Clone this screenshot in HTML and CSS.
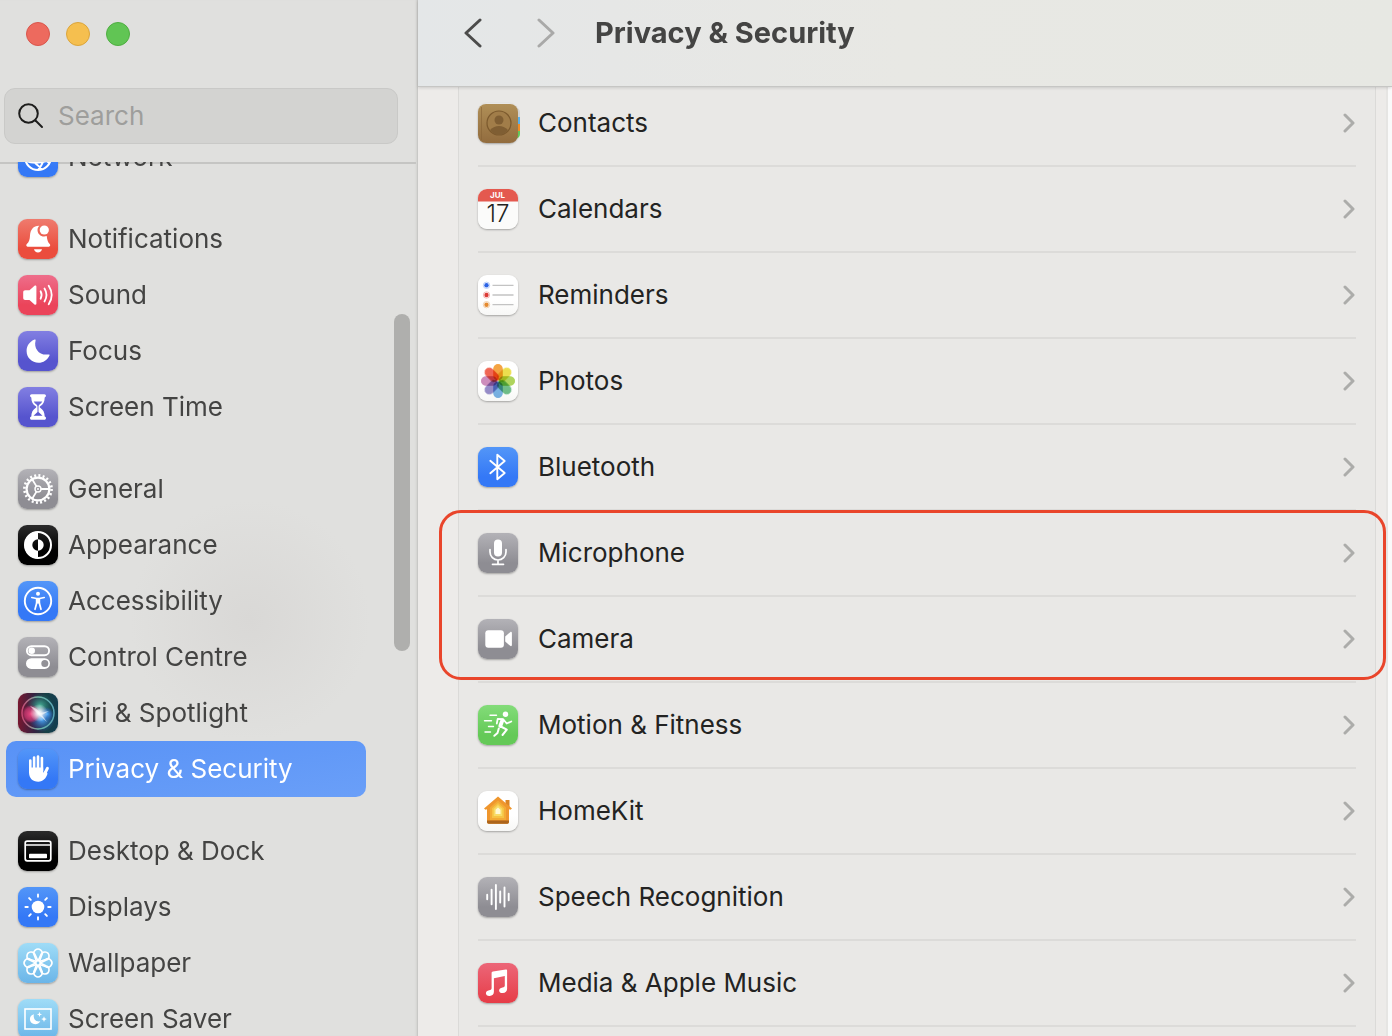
FILE: index.html
```html
<!DOCTYPE html>
<html lang="en-GB">
<head>
<meta charset="utf-8">
<title>Privacy &amp; Security</title>
<meta name="viewport" content="width=device-width, initial-scale=1">
<link rel="stylesheet" href="styles.css">
</head>
<body>
<div class="window">
  <aside class="sidebar">
    <header class="sidebar-head">
      <div class="lights">
        <button class="light light-close" type="button" aria-label="Close"></button>
        <button class="light light-min" type="button" aria-label="Minimise"></button>
        <button class="light light-zoom" type="button" aria-label="Zoom"></button>
      </div>
      <label class="search">
        <svg class="search-icon" viewBox="0 0 26 26" aria-hidden="true"><circle cx="10.500" cy="10.500" r="9.300"/><path d="M17.500 17.500L24 24"/></svg>
        <input class="search-input" type="search" placeholder="Search" aria-label="Search">
      </label>
    </header>
    <nav class="nav" aria-label="Settings">
      <div class="nav-scroll">
        <ul class="nav-group">
          <li><a class="nav-item" href="#network"><svg class="tile blue" viewBox="0 0 40 40" aria-hidden="true"><g fill="none" stroke="#fff" stroke-width="2"><circle cx="20" cy="20" r="13"/><path d="M8 24q10 4 24-1M14 18l3 8 7 6M27 17q-1 9-7 16M16 25l8-6 7 7"/></g></svg>Network</a></li>
        </ul>
        <ul class="nav-group">
          <li><a class="nav-item" href="#notifications"><svg class="tile red" viewBox="0 0 40 40" aria-hidden="true"><path fill="#fff" d="M21.300 6.800c-1.200 1.200-1.800 2.600-1.800 4.200 0 3.500 2.900 6.600 6.600 6.600 1 0 1.800-.2 2.600-.5.500 4.400 1.300 6.300 3 8 .9 1 .6 2.600-.8 2.600H9.600c-1.400 0-1.700-1.600-.8-2.600 2.300-2.500 3-4.500 3.200-8.700.3-5.500 3.500-9.800 9.300-9.600zM16 30.200h8c-.4 2-1.900 3.200-4 3.200s-3.600-1.200-4-3.200z"/><circle cx="26.300" cy="11" r="4.600" fill="#fff"/></svg>Notifications</a></li>
          <li><a class="nav-item" href="#sound"><svg class="tile pink" viewBox="0 0 40 40" aria-hidden="true"><path fill="#fff" d="M7.200 15.200h4.300l5-4.400c.8-.7 1.900-.4 1.900.8v17c0 1.200-1.100 1.500-1.900.8l-5-4.400H7.200c-1.300 0-2-.7-2-2v-5.800c0-1.300.7-2 2-2z"/><g fill="none" stroke="#fff" stroke-width="1.800" stroke-linecap="round"><path d="M22.600 16.300q2 3.700 0 7.400M26.500 13.500q4 6.500 0 13M30.700 10.700q6 9.300 0 18.600"/></g></svg>Sound</a></li>
          <li><a class="nav-item" href="#focus"><svg class="tile indigo" viewBox="0 0 40 40" aria-hidden="true"><path fill="#fff" d="M16.600 8.600c.6-.3 1.200.1 1 .8-2.200 8 3.800 15.600 13.100 14 .7-.1 1.100.4.800 1-2 4.500-6.200 7.300-11 7.300C13.900 31.700 8.600 26.700 8.600 20c0-5 3-9.400 8-11.400z"/></svg>Focus</a></li>
          <li><a class="nav-item" href="#screen-time"><svg class="tile indigo" viewBox="0 0 40 40" aria-hidden="true"><path fill="#fff" fill-rule="evenodd" d="M13.700 7.200h12.600c2.100 0 2.200 2.900.4 3.200-.1 4.300-1.400 6.700-4.500 8.800-.6.400-.6 1.200 0 1.600 3.100 2.100 4.400 4.500 4.500 8.800 1.800.3 1.700 3.200-.4 3.200H13.700c-2.100 0-2.200-2.900-.4-3.200.1-4.300 1.400-6.700 4.500-8.800.6-.4.600-1.200 0-1.600-3.100-2.100-4.400-4.500-4.500-8.800-1.800-.3-1.700-3.200.4-3.200zm2 7.200q1 1.800 2.800 3.100 1 .8 1 2v5.500l-4 3.800h9l-4-3.800v-5.500q0-1.200 1-2 1.800-1.300 2.800-3.100z"/></svg>Screen Time</a></li>
        </ul>
        <ul class="nav-group">
          <li><a class="nav-item" href="#general"><svg class="tile gray" viewBox="0 0 40 40" aria-hidden="true"><g fill="none" stroke="#fff"><circle cx="20" cy="20" r="13.600" stroke-width="2.600" stroke-dasharray="2 2.272"/><circle cx="20" cy="20" r="11.400" stroke-width="2.200"/><circle cx="20" cy="20" r="3" stroke-width="1.400"/><path stroke-width="1.800" d="M23 20h8.500M18.500 17.400L14 10M18.500 22.600L14 30"/></g><circle cx="20" cy="20" r="1" fill="#fff"/></svg>General</a></li>
          <li><a class="nav-item" href="#appearance"><svg class="tile black" viewBox="0 0 40 40" aria-hidden="true"><circle cx="20" cy="20" r="13" fill="none" stroke="#fff" stroke-width="2"/><path fill="#fff" d="M20 6.500a13.500 13.500 0 0 0 0 27V25.700a5.700 5.700 0 0 1 0-11.400zM20 14.300a5.700 5.700 0 0 1 0 11.400z"/></svg>Appearance</a></li>
          <li><a class="nav-item" href="#accessibility"><svg class="tile blue" viewBox="0 0 40 40" aria-hidden="true"><circle cx="20" cy="20" r="13.200" fill="none" stroke="#fff" stroke-width="1.900"/><circle cx="20" cy="12.800" r="2" fill="#fff"/><path d="M13.800 16.500l4.700 1h3l4.700-1M18.700 22l-1.700 6.300M21.300 22l1.700 6.300" fill="none" stroke="#fff" stroke-width="1.700" stroke-linecap="round" stroke-linejoin="round"/><path fill="#fff" d="M17.800 17h4.400v5.500h-4.400z"/></svg>Accessibility</a></li>
          <li><a class="nav-item" href="#control-centre"><svg class="tile gray" viewBox="0 0 40 40" aria-hidden="true"><rect x="8.900" y="9.200" width="22.200" height="9" rx="4.500" fill="none" stroke="#fff" stroke-width="1.900"/><circle cx="13.700" cy="13.700" r="3.300" fill="#fff"/><rect x="8" y="21.300" width="24" height="10.600" rx="5.300" fill="#fff"/><circle cx="26.800" cy="26.600" r="3.500" fill="#929197"/></svg>Control Centre</a></li>
          <li><a class="nav-item" href="#siri"><svg class="tile" viewBox="0 0 40 40" aria-hidden="true"><defs><linearGradient id="siriBack" x1="0" y1="0" x2="1" y2="0"><stop offset="0" stop-color="#781830"/><stop offset=".4" stop-color="#352242"/><stop offset=".7" stop-color="#164046"/><stop offset="1" stop-color="#133d50"/></linearGradient><radialGradient id="siriPink"><stop offset="0" stop-color="#f04a83"/><stop offset=".7" stop-color="#c93670" stop-opacity=".75"/><stop offset="1" stop-color="#b92562" stop-opacity=".1"/></radialGradient><radialGradient id="siriTeal"><stop offset="0" stop-color="#48b59a"/><stop offset="1" stop-color="#227c74" stop-opacity="0"/></radialGradient><radialGradient id="siriBlue"><stop offset="0" stop-color="#4faeff"/><stop offset="1" stop-color="#315dc0" stop-opacity="0"/></radialGradient><radialGradient id="siriGlow"><stop offset="0" stop-color="#fff"/><stop offset=".25" stop-color="#fff" stop-opacity=".85"/><stop offset="1" stop-color="#fff" stop-opacity="0"/></radialGradient><linearGradient id="siriRing"><stop offset="0" stop-color="#c84673"/><stop offset=".5" stop-color="#6fb9a5"/><stop offset="1" stop-color="#5aa5b8"/></linearGradient></defs><rect width="40" height="40" rx="9" fill="url(#siriBack)"/><circle cx="22" cy="13" r="13" fill="url(#siriTeal)"/><circle cx="24" cy="26" r="13" fill="url(#siriBlue)"/><circle cx="13" cy="21" r="9" fill="url(#siriPink)"/><circle cx="29" cy="21" r="7" fill="url(#siriBlue)"/><circle cx="21" cy="20" r="9" fill="url(#siriGlow)"/><path d="M12 13q7 2 10 7l9-2-7 4 5 7-7-6z" fill="#fff" opacity=".6"/><circle cx="20" cy="20" r="16" fill="none" stroke="url(#siriRing)" stroke-width="1.500"/></svg>Siri &amp; Spotlight</a></li>
          <li><a class="nav-item selected" href="#privacy" aria-current="page"><svg class="tile blue" viewBox="0 0 40 40" aria-hidden="true"><g stroke="#fff" stroke-width="2.600" stroke-linecap="round" fill="none"><path d="M12.300 11.500V23M16.100 8.500V21M20 7.500V20M23.900 9V22"/><path d="M29.400 19.300L26.300 25.500" stroke-width="3"/></g><path fill="#fff" d="M11 18.500h14.200v5.500l2.700-3 1.600 3.800c-1.300 4.400-4.300 7.900-9.200 7.900-5.800 0-9.300-3.600-9.300-9.500z"/></svg>Privacy &amp; Security</a></li>
        </ul>
        <ul class="nav-group">
          <li><a class="nav-item" href="#desktop"><svg class="tile black" viewBox="0 0 40 40" aria-hidden="true"><rect x="7.200" y="10.200" width="25.600" height="19.600" rx="2" fill="none" stroke="#fff" stroke-width="1.700"/><path d="M7 14h26" stroke="#fff" stroke-width="1.500"/><rect x="11" y="22.800" width="18" height="4.400" rx=".8" fill="#fff"/></svg>Desktop &amp; Dock</a></li>
          <li><a class="nav-item" href="#displays"><svg class="tile blue" viewBox="0 0 40 40" aria-hidden="true"><circle cx="20" cy="20" r="6.300" fill="#fff"/><path d="M20 7.400v2.400M20 30.200v2.400M7.400 20h2.400M30.200 20h2.400M11.100 11.100l1.700 1.700M27.200 27.200l1.700 1.700M11.100 28.900l1.700-1.700M27.200 12.800l1.700-1.700" stroke="#fff" stroke-width="1.900" stroke-linecap="round"/></svg>Displays</a></li>
          <li><a class="nav-item" href="#wallpaper"><svg class="tile sky" viewBox="0 0 40 40" aria-hidden="true"><defs><path id="petal" d="M18.600 18.500L16.400 12.500A4.200 4.200 0 1 1 23.600 12.500L21.400 18.500"/></defs><g fill="none" stroke="#fff" stroke-width="1.600"><use href="#petal"/><use href="#petal" transform="rotate(45 20 20)"/><use href="#petal" transform="rotate(90 20 20)"/><use href="#petal" transform="rotate(135 20 20)"/><use href="#petal" transform="rotate(180 20 20)"/><use href="#petal" transform="rotate(225 20 20)"/><use href="#petal" transform="rotate(270 20 20)"/><use href="#petal" transform="rotate(315 20 20)"/><circle cx="20" cy="20" r="2.200"/></g></svg>Wallpaper</a></li>
          <li><a class="nav-item" href="#screen-saver"><svg class="tile sky" viewBox="0 0 40 40" aria-hidden="true"><rect x="7" y="10" width="26" height="20" fill="none" stroke="#fff" stroke-width="1.600"/><path fill="#fff" d="M15.900 15.200c-1 4.600 1.900 7.900 6.400 7.100-1.100 2-2.900 3-5 3-3.100 0-5.400-2.200-5.400-5.200 0-2.300 1.500-4.200 4-4.900zM21.500 12.800l.7 1.900 1.900.7-1.900.7-.7 1.900-.7-1.900-1.900-.7 1.900-.7zM26 17.300l.8 2 2 .8-2 .8-.8 2-.8-2-2-.8 2-.8z"/></svg>Screen Saver</a></li>
        </ul>
      </div>
      <div class="scroll-thumb"></div>
    </nav>
  </aside>

  <main class="main">
    <header class="toolbar">
      <button class="step" type="button" aria-label="Back"><svg viewBox="0 0 18 30" aria-hidden="true"><path d="M16 2L2 15l14 13"/></svg></button>
      <button class="step step-off" type="button" aria-label="Forward"><svg viewBox="0 0 18 30" aria-hidden="true"><path d="M2 2l14 13L2 28"/></svg></button>
      <h1 class="title">Privacy &amp; Security</h1>
    </header>
    <div class="content">
      <div class="card">
        <a class="row" href="#contacts"><svg class="tile" viewBox="0 0 40 40" aria-hidden="true"><defs><linearGradient id="leather" x2="0" y2="1"><stop offset="0" stop-color="#b08f57"/><stop offset="1" stop-color="#926c3e"/></linearGradient></defs><path d="M36 5h3q3 1 3 5v5h-6z" fill="#d2d2d0"/><path d="M37 14h5v7h-5z" fill="#58b0ea"/><path d="M37 21h5v7h-5z" fill="#f08c27"/><path d="M37 28h5v3q0 4-5 5z" fill="#63c85b"/><rect x="0" y="1" width="40" height="39" rx="8" fill="url(#leather)"/><path d="M3.500 4v33" stroke="#876336" stroke-width="1" opacity=".6"/><circle cx="21" cy="20" r="12" fill="#a17d49" stroke="#7c5a2e" stroke-width="1.200"/><circle cx="21" cy="17" r="4.500" fill="#7f5e33"/><path d="M12 27q4-4 9-4t9 4q-3.500 5-9 5t-9-5z" fill="#7f5e33"/></svg><span class="row-name">Contacts</span><svg class="chevron" viewBox="0 0 12 20" aria-hidden="true"><path d="M2 2l8 8-8 8"/></svg></a>
        <a class="row" href="#calendars"><svg class="tile" viewBox="0 0 40 40" aria-hidden="true"><rect width="40" height="40" rx="9" fill="#fbfbfa"/><path d="M0 12.500V9a9 9 0 0 1 9-9h22a9 9 0 0 1 9 9v3.500z" fill="#e4594f"/><text x="19.500" y="9.400" class="cal-month">JUL</text><text x="20" y="33" class="cal-day">17</text></svg><span class="row-name">Calendars</span><svg class="chevron" viewBox="0 0 12 20" aria-hidden="true"><path d="M2 2l8 8-8 8"/></svg></a>
        <a class="row" href="#reminders"><svg class="tile white" viewBox="0 0 40 40" aria-hidden="true"><path d="M14.500 10.300h21M14.500 20h21M14.500 29.700h21" stroke="#c3c3c3" stroke-width="1.300"/><g fill="none" stroke-width=".8"><circle cx="8.500" cy="10.300" r="3.200" stroke="#a8c3f8"/><circle cx="8.500" cy="20" r="3.200" stroke="#f0a6a3"/><circle cx="8.500" cy="29.700" r="3.200" stroke="#efc79c"/></g><circle cx="8.500" cy="10.300" r="2.200" fill="#2b63e5"/><circle cx="8.500" cy="20" r="2.200" fill="#dc3a35"/><circle cx="8.500" cy="29.700" r="2.200" fill="#e58a2f"/></svg><span class="row-name">Reminders</span><svg class="chevron" viewBox="0 0 12 20" aria-hidden="true"><path d="M2 2l8 8-8 8"/></svg></a>
        <a class="row" href="#photos"><svg class="tile white" viewBox="0 0 40 40" aria-hidden="true"><g class="petals"><rect x="15.200" y="3" width="9.600" height="16.500" rx="4.800" fill="#f39a2d"/><rect x="15.200" y="3" width="9.600" height="16.500" rx="4.800" fill="#eadb3a" transform="rotate(45 20 20)"/><rect x="15.200" y="3" width="9.600" height="16.500" rx="4.800" fill="#a6cf4a" transform="rotate(90 20 20)"/><rect x="15.200" y="3" width="9.600" height="16.500" rx="4.800" fill="#5fb77c" transform="rotate(135 20 20)"/><rect x="15.200" y="3" width="9.600" height="16.500" rx="4.800" fill="#6aa9e2" transform="rotate(180 20 20)"/><rect x="15.200" y="3" width="9.600" height="16.500" rx="4.800" fill="#8b80c4" transform="rotate(225 20 20)"/><rect x="15.200" y="3" width="9.600" height="16.500" rx="4.800" fill="#c880b4" transform="rotate(270 20 20)"/><rect x="15.200" y="3" width="9.600" height="16.500" rx="4.800" fill="#ee5440" transform="rotate(315 20 20)"/></g></svg><span class="row-name">Photos</span><svg class="chevron" viewBox="0 0 12 20" aria-hidden="true"><path d="M2 2l8 8-8 8"/></svg></a>
        <a class="row" href="#bluetooth"><svg class="tile blue" viewBox="0 0 40 40" aria-hidden="true"><path d="M12.300 13.800L26.700 26 19.300 32.200V7.800L26.700 14 12.300 26.200" fill="none" stroke="#fff" stroke-width="1.900" stroke-linecap="round" stroke-linejoin="round"/></svg><span class="row-name">Bluetooth</span><svg class="chevron" viewBox="0 0 12 20" aria-hidden="true"><path d="M2 2l8 8-8 8"/></svg></a>
        <a class="row" href="#microphone"><svg class="tile gray" viewBox="0 0 40 40" aria-hidden="true"><rect x="16" y="6.500" width="8" height="17" rx="4" fill="#fff"/><path d="M12 16.500v2.500a8 8 0 0 0 16 0v-2.500M20 27v4M14.500 31.300h11" fill="none" stroke="#fff" stroke-width="1.700" stroke-linecap="round"/></svg><span class="row-name">Microphone</span><svg class="chevron" viewBox="0 0 12 20" aria-hidden="true"><path d="M2 2l8 8-8 8"/></svg></a>
        <a class="row" href="#camera"><svg class="tile gray" viewBox="0 0 40 40" aria-hidden="true"><rect x="7.300" y="11.300" width="18.600" height="17.400" rx="3" fill="#fff"/><path d="M27.200 17.500l5-4.300c.8-.7 1.700-.3 1.700.7v12.200c0 1-.9 1.400-1.700.7l-5-4.300z" fill="#fff"/></svg><span class="row-name">Camera</span><svg class="chevron" viewBox="0 0 12 20" aria-hidden="true"><path d="M2 2l8 8-8 8"/></svg></a>
        <a class="row" href="#motion"><svg class="tile green" viewBox="0 0 40 40" aria-hidden="true"><circle cx="27.500" cy="9.300" r="2.700" fill="#fff"/><path d="M12 10.300h6.500M6.500 15.700h7M10.500 21.500h5M7 27h5.500" stroke="#fff" stroke-width="1.400" stroke-linecap="round"/><g fill="none" stroke="#fff" stroke-linecap="round" stroke-linejoin="round"><path d="M18.800 18.500l.9-4.700 5.500.4 3.500 4.300 4.600-2" stroke-width="1.800"/><path d="M24.300 15.500l-2 5.500" stroke-width="3.800"/><path d="M22.800 21.500l6 3.200-4.300 5.300M20.800 23.500l-1.300 4.500-3.200 2.800" stroke-width="2"/></g></svg><span class="row-name">Motion &amp; Fitness</span><svg class="chevron" viewBox="0 0 12 20" aria-hidden="true"><path d="M2 2l8 8-8 8"/></svg></a>
        <a class="row" href="#homekit"><svg class="tile white" viewBox="0 0 40 40" aria-hidden="true"><path d="M27.500 9h4v8h-4z" fill="#db8524"/><path d="M20 5.500L6 17.500l1.500 1.300 1.500-.6V31q0 1.700 1.700 1.700h18.600q1.700 0 1.700-1.700V18.200l1.500.6 1.500-1.300z" fill="#ef962d"/><path d="M9 29.500h22V31q0 1.700-1.700 1.700H10.700Q9 32.700 9 31z" fill="#ac651d"/><path d="M20 9.500l-8 7V29h16V16.500z" fill="#f3ab35"/><path d="M20 12l-6 5.300V27h12v-9.700z" fill="#f6c344"/><path d="M20 14l-4.300 4V25h8.600v-7z" fill="#f8dc67"/><path d="M20 16.500l-2.500 2.300V23h5v-4.200z" fill="#fff9d5"/></svg><span class="row-name">HomeKit</span><svg class="chevron" viewBox="0 0 12 20" aria-hidden="true"><path d="M2 2l8 8-8 8"/></svg></a>
        <a class="row" href="#speech"><svg class="tile gray" viewBox="0 0 40 40" aria-hidden="true"><path d="M9.200 17.800v4.400M13.600 12.800v14.400M17.900 8v24M22.200 14.500v11M26.500 10.500v19M30.700 16.700v6.600" stroke="#fff" stroke-width="1.900" stroke-linecap="round"/></svg><span class="row-name">Speech Recognition</span><svg class="chevron" viewBox="0 0 12 20" aria-hidden="true"><path d="M2 2l8 8-8 8"/></svg></a>
        <a class="row" href="#media"><svg class="tile music" viewBox="0 0 40 40" aria-hidden="true"><path fill="#fff" d="M27.800 6.500c.8-.2 1.300.3 1.300 1v18.600c0 2.400-1.700 3.900-4.300 4-2.200.1-3.700-.9-3.700-2.600 0-1.800 1.300-2.700 3.400-3.100 1.700-.3 2.300-.8 2.300-2v-9.300l-10.900 2.200v13.400c0 2.500-1.600 4.100-4.200 4.200-2.300.1-3.800-.9-3.800-2.600s1.200-2.700 3.200-3.100c1.800-.3 2.500-.8 2.500-2.200V10.200c0-.9.500-1.400 1.400-1.600z"/></svg><span class="row-name">Media &amp; Apple Music</span><svg class="chevron" viewBox="0 0 12 20" aria-hidden="true"><path d="M2 2l8 8-8 8"/></svg></a>
        <div class="callout"></div>
      </div>
    </div>
  </main>
</div>
</body>
</html>
```
FILE: styles.css
```css
* {
  box-sizing: border-box;
}

body {
  margin: 0;
  font-family: Inter, "Liberation Sans", sans-serif;
  font-size: 26px;
  line-height: 32px;
  color: #232322;
}

a {
  color: inherit;
  text-decoration: none;
}

button {
  padding: 0;
  border: 0;
  background: none;
}

ul {
  margin: 0;
  padding: 0;
  list-style: none;
}

.window {
  display: flex;
  height: 100vh;
  overflow: hidden;
}

/* Sidebar */

.sidebar {
  display: flex;
  flex-direction: column;
  flex: none;
  width: 418px;
  border-right: 1px solid #c8c8c6;
  background: radial-gradient(circle at 250px 620px, #d9d8d6 0, #e0e0de 120px);
  box-shadow: inset -2px 0 2px -1px #d2d2d0;
  color: #444443;
}

.sidebar-head {
  flex: none;
  height: 162px;
  padding: 22px 19px 0 4px;
}

.lights {
  display: flex;
  gap: 16px;
  padding-left: 22px;
  margin-bottom: 42px;
}

.light {
  width: 24px;
  height: 24px;
  border: 1px solid;
  border-radius: 50%;
}

.light-close {
  background: #ed6a5e;
  border-color: #d9564c;
}

.light-min {
  background: #f5bf4f;
  border-color: #dba53c;
}

.light-zoom {
  background: #61c554;
  border-color: #4fae41;
}

.search {
  display: flex;
  align-items: center;
  gap: 14px;
  height: 56px;
  padding: 0 13px;
  border: 1px solid #c9c9c7;
  border-radius: 11px;
  background: #d3d3d1;
}

.search-icon {
  flex: none;
  width: 26px;
  height: 26px;
  fill: none;
  stroke: #1d1d1c;
  stroke-width: 2;
  stroke-linecap: round;
}

.search-input {
  flex: 1;
  min-width: 0;
  padding: 0;
  border: 0;
  outline: 0;
  background: none;
  font: inherit;
  color: inherit;
}

.search-input::placeholder {
  color: #9e9e9c;
  opacity: 1;
}

.nav {
  position: relative;
  flex: 1;
  min-height: 0;
  overflow: hidden;
  margin-right: 1px;
  box-shadow: inset 0 2px 0 #c5c5c3;
}

.nav-scroll {
  display: flex;
  flex-direction: column;
  gap: 26px;
  margin-top: -33px;
  padding: 0 50px 0 6px;
}

.nav-item {
  display: flex;
  align-items: center;
  gap: 10px;
  height: 56px;
  padding: 0 12px;
  border-radius: 10px;
  white-space: nowrap;
}

.selected {
  background: linear-gradient(170deg, #5892f6, #6a9ff8);
  color: #fff;
}

.scroll-thumb {
  position: absolute;
  top: 152px;
  right: 6px;
  width: 16px;
  height: 337px;
  border-radius: 8px;
  background: #afafad;
}

/* Icon tiles */

.tile {
  flex: none;
  width: 40px;
  height: 40px;
  border-radius: 9px;
  overflow: visible;
  box-shadow: 0 1px 2px rgba(0, 0, 0, 0.3);
}

.blue {
  background: linear-gradient(#5396f8, #3478f6 75%);
}

.red {
  background: linear-gradient(#ef7b6e, #eb4d3d 75%);
}

.pink {
  background: linear-gradient(#ee6e8b, #eb445a 75%);
}

.indigo {
  background: linear-gradient(#827fe2, #5654ce 75%);
}

.gray {
  background: linear-gradient(#b3b2b7, #8e8d93 75%);
}

.black {
  background: linear-gradient(#2b2b2b, #000 65%);
}

.sky {
  background: linear-gradient(#9fdcf7, #6bb5e8);
}

.green {
  background: linear-gradient(#83dc79, #64c957 75%);
}

.music {
  background: linear-gradient(#ec6678, #e63c47);
}

.white {
  background: linear-gradient(#fff 60%, #f7f7f6);
}

.petals rect {
  mix-blend-mode: multiply;
  opacity: 0.9;
}

.cal-month {
  font-size: 8px;
  font-weight: 700;
  text-anchor: middle;
  fill: #fff;
}

.cal-day {
  font-size: 24px;
  font-weight: 300;
  text-anchor: middle;
  fill: #232322;
}

/* Detail pane */

.main {
  display: flex;
  flex-direction: column;
  flex: 1;
  min-width: 0;
}

.toolbar {
  position: relative;
  z-index: 1;
  display: flex;
  align-items: center;
  flex: none;
  height: 87px;
  padding: 0 46px 20px;
  border-bottom: 1px solid #c6c6c4;
  background: linear-gradient(90deg, #e4e7e8, #e6e7e6 20%, #e8e8e4 50%, #e7e8e3);
  box-shadow: 0 1px 3px rgba(0, 0, 0, 0.14);
}

.step {
  width: 18px;
  height: 30px;
  margin-right: 55px;
}

.step svg {
  display: block;
  fill: none;
  stroke: #4c4c4b;
  stroke-width: 3;
  stroke-linecap: round;
  stroke-linejoin: round;
}

.step-off {
  margin-right: 40px;
}

.step-off svg {
  stroke: #a9a9a8;
}

.title {
  margin: 0;
  font-size: 29px;
  line-height: 36px;
  font-weight: 700;
  color: #444443;
  white-space: nowrap;
}

.content {
  display: flex;
  flex-direction: column;
  flex: 1;
  min-height: 0;
  overflow: hidden;
  padding: 0 10px 0 40px;
  border-right: 4px solid #fafafa;
  background: #edebe9;
  box-shadow: inset -2px 0 0 #e6e5e3;
}

.card {
  position: relative;
  flex: 1 0 auto;
  margin: -6px 2px 0 0;
  padding: 0 19px;
  border: 1px solid #dbdad8;
  border-width: 0 1px;
  background: #e9e8e6;
}

.row {
  display: flex;
  align-items: center;
  gap: 20px;
  height: 86px;
  border-bottom: 2px solid #dcdbd9;
}

.row-name {
  flex: 1;
  white-space: nowrap;
}

.chevron {
  flex: none;
  width: 12px;
  height: 20px;
  margin-right: 1px;
  fill: none;
  stroke: #acacaa;
  stroke-width: 3;
  stroke-linecap: round;
  stroke-linejoin: round;
}

/* Marker round the microphone and camera rows */

.callout {
  position: absolute;
  top: 429px;
  left: -20px;
  right: -11px;
  height: 170px;
  border: 3px solid #e9452b;
  border-radius: 22px;
  pointer-events: none;
}
```
